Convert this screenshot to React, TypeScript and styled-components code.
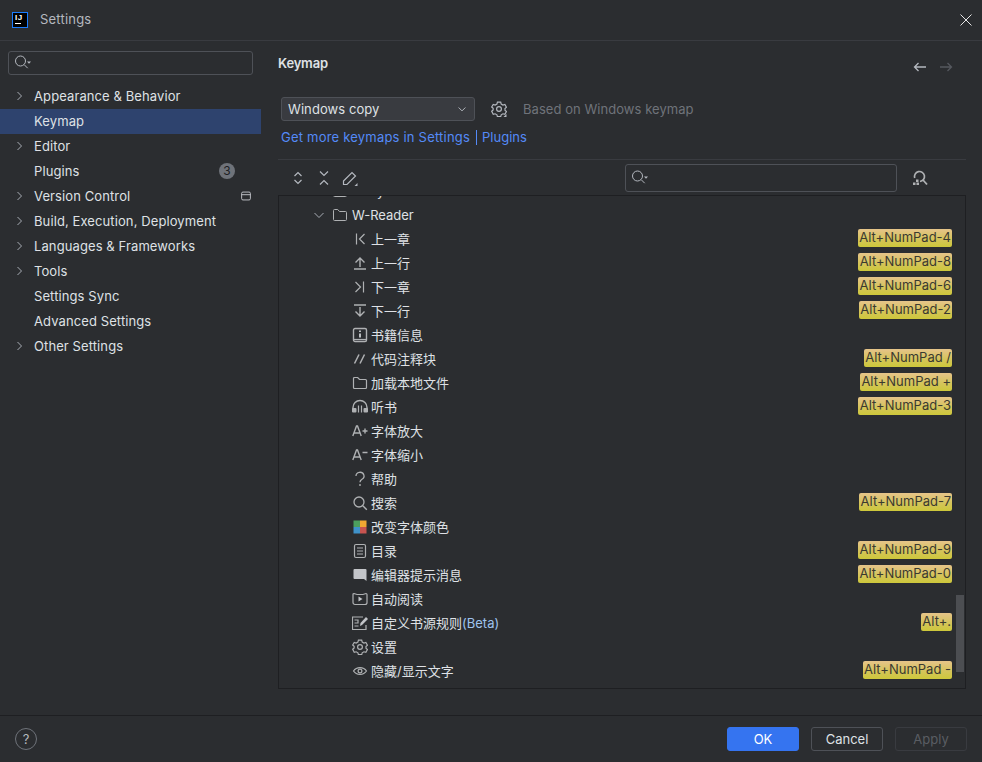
import React, { FC, ReactNode } from "react";
import styled, { createGlobalStyle } from "styled-components";

const GlobalStyle = createGlobalStyle`
  html, body {
    margin: 0;
    padding: 0;
    background: #2b2d30;
  }
  * {
    box-sizing: border-box;
  }
  #root {
    height: 762px;
  }
`;

const Window = styled.div`
  display: flex;
  flex-direction: column;
  width: 982px;
  height: 762px;
  overflow: hidden;
  background: #2b2d30;
  color: #dfe1e5;
  font-family: Inter, "Noto Sans CJK SC", sans-serif;
  font-size: 13px;
`;

const TitleBar = styled.header`
  display: flex;
  align-items: center;
  flex: 0 0 41px;
  padding: 0 8px 1px 12px;
  border-bottom: 1px solid #393b40;
`;

const Logo = styled.div`
  display: flex;
  flex-direction: column;
  width: 16px;
  height: 16px;
  padding: 1px 2px;
  background: #000;
  border: 1px solid #1a7dff;
  color: #fff;
  font-family: "Liberation Sans", sans-serif;
  font-size: 8px;
  font-weight: 700;
  line-height: 8px;
  letter-spacing: 0.5px;

  &::after {
    content: "";
    width: 6px;
    height: 1px;
    margin-top: 1px;
    background: #fff;
  }
`;

const WindowTitle = styled.span`
  flex: 1;
  margin-left: 12px;
  padding-bottom: 2px;
  color: #b4b8bf;
  letter-spacing: 0.2px;
`;

const Body = styled.div`
  display: flex;
  flex: 1;
  min-height: 0;
`;

const Sidebar = styled.nav`
  flex: 0 0 261px;
  padding-top: 10px;
  letter-spacing: 0.1px;
`;

const SearchBox = styled.div<{ $height: number }>`
  display: flex;
  align-items: center;
  height: ${(p) => p.$height}px;
  padding-left: 6px;
  border: 1px solid #4e5157;
  border-radius: 3px;
`;

const SideSearch = styled(SearchBox)`
  margin: 0 8px 9px;
`;

const SideRow = styled.div<{ $selected?: boolean }>`
  display: flex;
  align-items: center;
  height: 25px;
  padding: 0 8px 2px 13px;
  background: ${(p) => (p.$selected ? "#2e436e" : "transparent")};
`;

const ChevronSlot = styled.span`
  display: flex;
  flex: 0 0 21px;
`;

const SideLabel = styled.span`
  flex: 1;
  white-space: nowrap;
`;

const CountBadge = styled.span`
  display: flex;
  align-items: center;
  justify-content: center;
  width: 16px;
  height: 16px;
  margin-right: 18px;
  border-radius: 50%;
  background: #6f737a;
  color: #1e1f22;
  font-size: 12px;
  letter-spacing: 0;
`;

const Main = styled.main`
  display: flex;
  flex: 1;
  flex-direction: column;
  min-width: 0;
  padding: 0 16px 26px 17px;
`;

const Header = styled.div`
  display: flex;
  justify-content: space-between;
  flex: 0 0 56px;
  padding-top: 14px;
`;

const PageTitle = styled.h1`
  margin: 0;
  font-size: 13px;
  line-height: 16px;
  font-weight: 600;
  letter-spacing: -0.2px;
  color: #dfe1e5;
`;

const NavArrows = styled.div`
  display: flex;
  gap: 10px;
  padding: 4px 12px 0 0;
`;

const SchemeRow = styled.div`
  display: flex;
  align-items: center;
  height: 24px;
  padding-left: 3px;
`;

const Select = styled.div`
  display: flex;
  align-items: center;
  justify-content: space-between;
  width: 194px;
  height: 24px;
  padding: 0 6px;
  background: #393b40;
  border: 1px solid #4e5157;
  border-radius: 3px;
  letter-spacing: 0.08px;
`;

const Hint = styled.span`
  margin-left: 16px;
  color: #6f737a;
  letter-spacing: 0.05px;
`;

const GearWrap = styled.span`
  display: flex;
  margin-left: 16px;
`;

const LinkRow = styled.div`
  display: flex;
  align-items: center;
  height: 16px;
  margin-top: 8px;
  padding-left: 3px;
  color: #548af7;
  letter-spacing: 0.21px;
`;

const LinkDivider = styled.span`
  width: 1px;
  height: 15px;
  margin: 0 5px 0 6px;
  background: #548af7;
`;

const PluginsLink = styled.span`
  letter-spacing: 0;
`;

const Toolbar = styled.div`
  display: flex;
  align-items: center;
  flex: 0 0 36px;
  margin-top: 14px;
  padding: 0 38px 0 12px;
  border-top: 1px solid #393b40;
`;

const ToolIcons = styled.div`
  display: flex;
  gap: 10px;
  flex: 1;
`;

const ToolSearch = styled(SearchBox)`
  width: 272px;
  margin-right: 15px;
`;

const Tree = styled.div`
  position: relative;
  flex: 1;
  min-height: 0;
  overflow: hidden;
  border: 1px solid #1e1f22;
`;

const TreeList = styled.div`
  margin-top: -17px;
`;

const TreeRow = styled.div<{ $indent: number }>`
  display: flex;
  align-items: center;
  height: 24px;
  padding: 0 13px 0 ${(p) => p.$indent}px;
`;

const RowIcon = styled.span`
  display: flex;
  align-items: center;
  justify-content: center;
  flex: 0 0 16px;
  height: 16px;
  margin-right: 4px;
`;

const TreeChevron = styled(RowIcon)`
  margin-right: 5px;
`;

const RowText = styled.span`
  flex: 1;
  white-space: nowrap;
`;

const ActionText = styled(RowText)`
  margin-left: -1px;
  padding-bottom: 2px;
`;

const Beta = styled.span`
  color: #9fc3ee;
`;

const Shortcut = styled.span`
  height: 18px;
  margin-top: -2px;
  padding: 0 1px 0 1.5px;
  border-radius: 2px;
  background: linear-gradient(#e6c48a, #d5c45c 55%, #cdc83a);
  color: #3b3a30;
  line-height: 16px;
  white-space: nowrap;
`;

const ScrollThumb = styled.div`
  position: absolute;
  top: 399px;
  right: 1px;
  width: 8px;
  height: 77px;
  background: #4c4e52;
`;

const Footer = styled.footer`
  display: flex;
  align-items: center;
  flex: 0 0 47px;
  padding: 0 15px;
  border-top: 1px solid #1e1f22;
`;

const HelpButton = styled.span`
  display: flex;
  align-items: center;
  justify-content: center;
  width: 22px;
  height: 22px;
  margin-right: auto;
  border: 1px solid #6f737a;
  border-radius: 50%;
  color: #b4b8bf;
`;

const Button = styled.button<{ $variant?: "primary" | "disabled" }>`
  width: 72px;
  height: 24px;
  margin-left: 12px;
  padding: 0;
  border-radius: 3px;
  font: inherit;
  border: 1px solid
    ${(p) =>
      p.$variant === "primary"
        ? "#3574f0"
        : p.$variant === "disabled"
        ? "#393b40"
        : "#4e5157"};
  background: ${(p) => (p.$variant === "primary" ? "#3574f0" : "transparent")};
  color: ${(p) =>
    p.$variant === "primary"
      ? "#fff"
      : p.$variant === "disabled"
      ? "#5a5d63"
      : "#dfe1e5"};
`;

const Svg: FC<{
  size?: number;
  color?: string;
  weight?: number;
  children: ReactNode;
}> = ({ size = 16, color = "#afb1b3", weight = 1, children }) => (
  <svg
    width={size}
    height={size}
    viewBox="0 0 16 16"
    fill="none"
    stroke={color}
    strokeWidth={weight}
  >
    {children}
  </svg>
);

const ChevronRight = () => (
  <Svg color="#a8adb5">
    <path d="M4.500 4 8.500 8l-4 4" />
  </Svg>
);

const ChevronDown = () => (
  <Svg color="#a8adb5">
    <path d="M3.500 6 8 10.500 12.500 6" />
  </Svg>
);

const SearchDrop = () => (
  <svg width="18" height="16" viewBox="0 0 18 16" fill="none" stroke="#b4b8bf">
    <circle cx="5.500" cy="6" r="5" />
    <path d="m9.200 9.700 3.500 3.500" />
    <path d="M12 6.500h4l-2 2.200z" fill="#b4b8bf" stroke="none" />
  </svg>
);

const Corner = () => <path d="M15.500 13v3h-3z" fill="#b4b8bf" stroke="none" />;

const GearPath = () => (
  <>
    <path
      d="M6.300 1.500h3.400l.5 2 1.800 1 2-.6 1.600 2.900-1.500 1.300v1.800l1.500 1.300-1.600 2.900-2-.6-1.800 1-.5 2H6.300l-.5-2-1.800-1-2 .6L.4 10.900l1.500-1.300V7.800L.4 6.500 2 3.900l2 .6 1.800-1z"
      transform="translate(.3 -.3) scale(.97)"
    />
    <circle cx="8" cy="8" r="2.400" />
  </>
);

const treeIcons: Record<string, ReactNode> = {
  prev: <path d="M4.500 2.500v11M12.500 3 7.500 8l5 5" />,
  up: <path d="M8 12V3.500M3.500 7.500 8 3l4.500 4.500M2 14h12" strokeWidth={1.400} />,
  next: <path d="M11.500 2.500v11M3.500 3l5 5-5 5" />,
  down: <path d="M8 4v8.500M3.500 8.500 8 13l4.500-4.500M2 2h12" strokeWidth={1.400} />,
  info: (
    <>
      <rect x="1.500" y="1.500" width="13" height="13" rx="1.500" strokeWidth={1.400} />
      <path d="M8 6.500v4M8 3.500v1.500" strokeWidth={1.600} stroke="#dfe1e5" />
      <path d="M1.500 12.500h13" />
    </>
  ),
  comment: <path d="M7 3.500 2.500 12.500M12.500 3.500 8 12.500" strokeWidth={1.500} />,
  folder: (
    <path d="M1.500 3.500a1 1 0 0 1 1-1h3.200l1.800 2h6a1 1 0 0 1 1 1v7a1 1 0 0 1-1 1h-11a1 1 0 0 1-1-1z" />
  ),
  listen: (
    <>
      <path d="M1 13V8.500a7 7 0 0 1 14 0V13" strokeWidth={1.400} />
      <rect x="0" y="9" width="4.500" height="4.500" rx="1" fill="#afb1b3" stroke="none" />
      <rect x="11.500" y="9" width="4.500" height="4.500" rx="1" fill="#afb1b3" stroke="none" />
      <path d="M6.500 6.500v7M9.500 6.500v7" strokeWidth={1.200} />
    </>
  ),
  zoomIn: (
    <path d="M.8 13 4.500 3h1l3.700 10M2 10h6M10.500 8h5M13 5.500v5" strokeWidth={1.400} />
  ),
  zoomOut: (
    <path d="M.8 13 4.500 3h1l3.700 10M2 10h6M10.500 5.500h5" strokeWidth={1.400} />
  ),
  help: (
    <path d="M4 5a4 3.700 0 1 1 6 3.200C8.700 9 8 9.800 8 11.200M8 13v2" strokeWidth={1.300} />
  ),
  search: (
    <>
      <circle cx="7" cy="7" r="5" strokeWidth={1.300} />
      <path d="m10.800 10.800 4 4" strokeWidth={1.400} />
    </>
  ),
  palette: (
    <>
      <rect x="1.500" y="1.500" width="6.500" height="6.500" fill="#4c9f5e" stroke="none" />
      <rect x="8" y="1.500" width="6.500" height="6.500" fill="#f0a732" stroke="none" />
      <rect x="1.500" y="8" width="6.500" height="6.500" fill="#3f92c9" stroke="none" />
      <rect x="8" y="8" width="6.500" height="6.500" fill="#c75450" stroke="none" />
    </>
  ),
  toc: (
    <>
      <rect x="2.500" y="1.500" width="11" height="13" rx="1.500" />
      <path d="M5 5h6M5 8h6M5 11h6" />
    </>
  ),
  bubble: (
    <path
      d="M2.500 2h11a1 1 0 0 1 1 1v11L12 12H2.500a1 1 0 0 1-1-1V3a1 1 0 0 1 1-1z"
      fill="#c3c5c9"
      stroke="none"
    />
  ),
  play: (
    <>
      <path d="M2 2.500 5 3.500h6l3-1a1 1 0 0 1 1 1v8a2 2 0 0 1-2 2H3a2 2 0 0 1-2-2v-8a1 1 0 0 1 1-1z" />
      <path d="M6.500 5.500v5l4-2.500z" fill="#c3c5c9" stroke="none" />
    </>
  ),
  rules: (
    <>
      <path d="M11 2H.5v12.500H14V10" />
      <path d="M2.500 5h3.500v3h-3.500M2.500 11h4" />
      <path d="m8 11 .5-3L14 2l2 2-6 6z" fill="#c3c5c9" stroke="none" />
    </>
  ),
  gear: <GearPath />,
  eye: (
    <>
      <path d="M1.500 8c3-4.500 10-4.500 13 0-3 4.500-10 4.500-13 0z" strokeWidth={1.200} />
      <circle cx="8" cy="8" r="1.900" strokeWidth={1.200} />
    </>
  ),
};

type Action = { label: ReactNode; icon: string; keys?: string };

const actions: Action[] = [
  { label: "上一章", icon: "prev", keys: "Alt+NumPad-4" },
  { label: "上一行", icon: "up", keys: "Alt+NumPad-8" },
  { label: "下一章", icon: "next", keys: "Alt+NumPad-6" },
  { label: "下一行", icon: "down", keys: "Alt+NumPad-2" },
  { label: "书籍信息", icon: "info" },
  { label: "代码注释块", icon: "comment", keys: "Alt+NumPad /" },
  { label: "加载本地文件", icon: "folder", keys: "Alt+NumPad +" },
  { label: "听书", icon: "listen", keys: "Alt+NumPad-3" },
  { label: "字体放大", icon: "zoomIn" },
  { label: "字体缩小", icon: "zoomOut" },
  { label: "帮助", icon: "help" },
  { label: "搜索", icon: "search", keys: "Alt+NumPad-7" },
  { label: "改变字体颜色", icon: "palette" },
  { label: "目录", icon: "toc", keys: "Alt+NumPad-9" },
  { label: "编辑器提示消息", icon: "bubble", keys: "Alt+NumPad-0" },
  { label: "自动阅读", icon: "play" },
  {
    label: (
      <>
        自定义书源规则<Beta>(Beta)</Beta>
      </>
    ),
    icon: "rules",
    keys: "Alt+.",
  },
  { label: "设置", icon: "gear" },
  { label: "隐藏/显示文字", icon: "eye", keys: "Alt+NumPad -" },
];

const sections: { name: string; arrow?: boolean }[] = [
  { name: "Appearance & Behavior", arrow: true },
  { name: "Keymap" },
  { name: "Editor", arrow: true },
  { name: "Plugins" },
  { name: "Version Control", arrow: true },
  { name: "Build, Execution, Deployment", arrow: true },
  { name: "Languages & Frameworks", arrow: true },
  { name: "Tools", arrow: true },
  { name: "Settings Sync" },
  { name: "Advanced Settings" },
  { name: "Other Settings", arrow: true },
];

const App: FC = () => (
  <Window>
    <GlobalStyle />
    <TitleBar>
      <Logo>IJ</Logo>
      <WindowTitle>Settings</WindowTitle>
      <Svg color="#e6e6e6">
        <path d="m2.500 2.500 11 11M13.500 2.500l-11 11" />
      </Svg>
    </TitleBar>
    <Body>
      <Sidebar>
        <SideSearch $height={24}>
          <SearchDrop />
        </SideSearch>
        {sections.map((s) => (
          <SideRow key={s.name} $selected={s.name === "Keymap"}>
            <ChevronSlot>{s.arrow && <ChevronRight />}</ChevronSlot>
            <SideLabel>{s.name}</SideLabel>
            {s.name === "Plugins" && <CountBadge>3</CountBadge>}
            {s.name === "Version Control" && (
              <Svg size={14} color="#ced0d6">
                <rect x="3" y="3.500" width="10" height="9" rx="1.500" />
                <path d="M3 6.500h10" />
              </Svg>
            )}
          </SideRow>
        ))}
      </Sidebar>
      <Main>
        <Header>
          <PageTitle>Keymap</PageTitle>
          <NavArrows>
            <Svg color="#b4b8bf" weight={1.300}>
              <path d="M14 8H2.500M6.500 4l-4 4 4 4" />
            </Svg>
            <Svg color="#55585e" weight={1.300}>
              <path d="M2 8h11.500M9.500 4l4 4-4 4" />
            </Svg>
          </NavArrows>
        </Header>
        <SchemeRow>
          <Select>
            Windows copy
            <Svg size={12} color="#b4b8bf">
              <path d="M3.500 6 8 10.500 12.500 6" strokeWidth={1.300} />
            </Svg>
          </Select>
          <GearWrap>
            <Svg color="#b4b8bf" weight={1.200}>
              <GearPath />
              <Corner />
            </Svg>
          </GearWrap>
          <Hint>Based on Windows keymap</Hint>
        </SchemeRow>
        <LinkRow>
          Get more keymaps in Settings
          <LinkDivider />
          <PluginsLink>Plugins</PluginsLink>
        </LinkRow>
        <Toolbar>
          <ToolIcons>
            <Svg color="#b4b8bf" weight={1.200}>
              <path d="m4.500 6 3.500-3.500L11.500 6M4.500 10 8 13.500l3.500-3.500" />
            </Svg>
            <Svg color="#b4b8bf" weight={1.200}>
              <path d="m4 1.500 4 4 4-4M4 14.500l4-4 4 4" />
            </Svg>
            <Svg color="#b4b8bf" weight={1.200}>
              <path d="M1.500 11 10 2.500l3.500 3.500L5 14.500H1.500z" />
              <Corner />
            </Svg>
          </ToolIcons>
          <ToolSearch $height={28}>
            <SearchDrop />
          </ToolSearch>
          <Svg color="#afb1b3">
            <path d="M2.700 8A5 5 0 1 1 8 11.500" strokeWidth={1.700} />
            <path d="m11 10 4 4.500" strokeWidth={1.800} />
            <path d="M4 9.500h2.500V12H4zM1 12.500h2.500V15H1zM4.500 12.500H7V15H4.500z" fill="#afb1b3" stroke="none" />
          </Svg>
        </Toolbar>
        <Tree>
          <TreeList>
            <TreeRow $indent={53}>
              <RowIcon>
                <Svg>{treeIcons.folder}</Svg>
              </RowIcon>
              <RowText>Diary</RowText>
            </TreeRow>
            <TreeRow $indent={32}>
              <TreeChevron>
                <ChevronDown />
              </TreeChevron>
              <RowIcon>
                <Svg>{treeIcons.folder}</Svg>
              </RowIcon>
              <RowText>W-Reader</RowText>
            </TreeRow>
            {actions.map((a) => (
              <TreeRow key={a.icon} $indent={73}>
                <RowIcon>
                  <Svg weight={1.200}>{treeIcons[a.icon]}</Svg>
                </RowIcon>
                <ActionText>{a.label}</ActionText>
                {a.keys && <Shortcut>{a.keys}</Shortcut>}
              </TreeRow>
            ))}
          </TreeList>
          <ScrollThumb />
        </Tree>
      </Main>
    </Body>
    <Footer>
      <HelpButton>?</HelpButton>
      <Button $variant="primary">OK</Button>
      <Button>Cancel</Button>
      <Button $variant="disabled">Apply</Button>
    </Footer>
  </Window>
);

export default App;
